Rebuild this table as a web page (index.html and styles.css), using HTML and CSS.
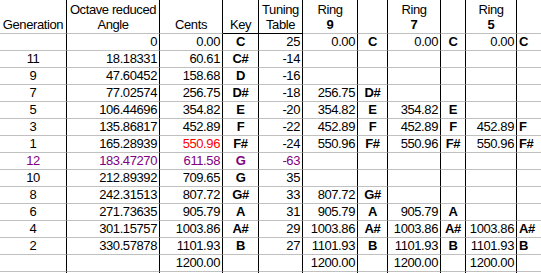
FILE: index.html
```html
<!DOCTYPE html>
<html>
<head>
<meta charset="utf-8">
<link rel="stylesheet" href="styles.css">
</head>
<body>
<table class="sheet">
<colgroup>
<col class="w-gen"><col class="w-ang"><col class="w-cents"><col class="w-key"><col class="w-tun">
<col class="w-r9"><col class="w-r9k"><col class="w-r7"><col class="w-r7k"><col class="w-r5"><col class="w-r5k">
</colgroup>
<tr class="h1">
<td></td><td class="c">Octave reduced</td><td></td><td></td><td class="c">Tuning</td>
<td class="c">Ring</td><td></td><td class="c">Ring</td><td></td><td class="c">Ring</td><td class="last"></td>
</tr>
<tr class="h2">
<td class="c">Generation</td><td class="c">Angle</td><td class="c">Cents</td><td class="c hb">Key</td><td class="c hb">Table</td>
<td class="c b">9</td><td></td><td class="c b">7</td><td></td><td class="c b">5</td><td class="last"></td>
</tr>
<tr>
<td class="c"></td><td>0</td><td>0.00</td><td class="k">C</td><td>25</td>
<td>0.00</td><td class="k">C</td><td>0.00</td><td class="k">C</td><td>0.00</td><td class="kl last">C</td>
</tr>
<tr>
<td class="c">11</td><td>18.18331</td><td>60.61</td><td class="k">C#</td><td>-14</td>
<td></td><td></td><td></td><td></td><td></td><td class="last"></td>
</tr>
<tr>
<td class="c">9</td><td>47.60452</td><td>158.68</td><td class="k">D</td><td>-16</td>
<td></td><td></td><td></td><td></td><td></td><td class="last"></td>
</tr>
<tr>
<td class="c">7</td><td>77.02574</td><td>256.75</td><td class="k">D#</td><td>-18</td>
<td>256.75</td><td class="k">D#</td><td></td><td></td><td></td><td class="last"></td>
</tr>
<tr>
<td class="c">5</td><td>106.44696</td><td>354.82</td><td class="k">E</td><td>-20</td>
<td>354.82</td><td class="k">E</td><td>354.82</td><td class="k">E</td><td></td><td class="last"></td>
</tr>
<tr>
<td class="c">3</td><td>135.86817</td><td>452.89</td><td class="k">F</td><td>-22</td>
<td>452.89</td><td class="k">F</td><td>452.89</td><td class="k">F</td><td>452.89</td><td class="kl last">F</td>
</tr>
<tr>
<td class="c">1</td><td>165.28939</td><td class="red">550.96</td><td class="k">F#</td><td>-24</td>
<td>550.96</td><td class="k">F#</td><td>550.96</td><td class="k">F#</td><td>550.96</td><td class="kl last">F#</td>
</tr>
<tr class="purple">
<td class="c">12</td><td>183.47270</td><td>611.58</td><td class="k">G</td><td>-63</td>
<td></td><td></td><td></td><td></td><td></td><td class="last"></td>
</tr>
<tr>
<td class="c">10</td><td>212.89392</td><td>709.65</td><td class="k">G</td><td>35</td>
<td></td><td></td><td></td><td></td><td></td><td class="last"></td>
</tr>
<tr>
<td class="c">8</td><td>242.31513</td><td>807.72</td><td class="k">G#</td><td>33</td>
<td>807.72</td><td class="k">G#</td><td></td><td></td><td></td><td class="last"></td>
</tr>
<tr>
<td class="c">6</td><td>271.73635</td><td>905.79</td><td class="k">A</td><td>31</td>
<td>905.79</td><td class="k">A</td><td>905.79</td><td class="k">A</td><td></td><td class="last"></td>
</tr>
<tr>
<td class="c">4</td><td>301.15757</td><td>1003.86</td><td class="k">A#</td><td>29</td>
<td>1003.86</td><td class="k">A#</td><td>1003.86</td><td class="k">A#</td><td>1003.86</td><td class="kl last">A#</td>
</tr>
<tr>
<td class="c">2</td><td>330.57878</td><td>1101.93</td><td class="k">B</td><td>27</td>
<td>1101.93</td><td class="k">B</td><td>1101.93</td><td class="k">B</td><td>1101.93</td><td class="kl last">B</td>
</tr>
<tr>
<td class="c"></td><td></td><td>1200.00</td><td class="k"></td><td></td>
<td>1200.00</td><td></td><td>1200.00</td><td></td><td>1200.00</td><td class="last"></td>
</tr>
<tr class="stub">
<td></td><td></td><td></td><td></td><td></td>
<td></td><td></td><td></td><td></td><td></td><td class="last"></td>
</tr>
</table>
</body>
</html>
```

FILE: styles.css
```css
html, body {
  margin: 0;
  padding: 0;
  background: #fff;
  overflow: hidden;
}

.sheet {
  border-collapse: separate;
  border-spacing: 0;
  table-layout: fixed;
  width: 541px;
  font-family: "Liberation Sans", Arial, sans-serif;
  font-size: 13px;
  letter-spacing: -0.4px;
  color: #000;
}

.w-gen { width: 67px; }
.w-ang { width: 93px; }
.w-cents { width: 63px; }
.w-key { width: 36px; }
.w-tun { width: 44px; }
.w-r9 { width: 55px; }
.w-r9k { width: 30px; }
.w-r7 { width: 53px; }
.w-r7k { width: 25px; }
.w-r5 { width: 51px; }
.w-r5k { width: 24px; }

.sheet td {
  padding: 0 2px;
  height: 16px;
  line-height: 16px;
  border-right: 1px solid #000;
  border-bottom: 1px solid #c0c0c0;
  white-space: nowrap;
  overflow: hidden;
  text-align: right;
  vertical-align: top;
}

.sheet td.last {
  border-right: none;
}

.sheet .h1 td {
  height: 15px;
  line-height: 15px;
  padding-top: 2px;
  border-bottom: none;
}

.sheet .h2 td.hb {
  border-bottom-color: #000;
}

.sheet .stub td {
  height: 1px;
  line-height: 1px;
  border-bottom: none;
}

.sheet td.c {
  text-align: center;
}

.sheet td.b {
  font-weight: bold;
}

.sheet td.k {
  text-align: center;
  font-weight: bold;
}

.sheet td.kl {
  text-align: left;
  font-weight: bold;
}

.sheet td.red {
  color: #ff0000;
}

.sheet .purple td {
  color: #800080;
}
```
